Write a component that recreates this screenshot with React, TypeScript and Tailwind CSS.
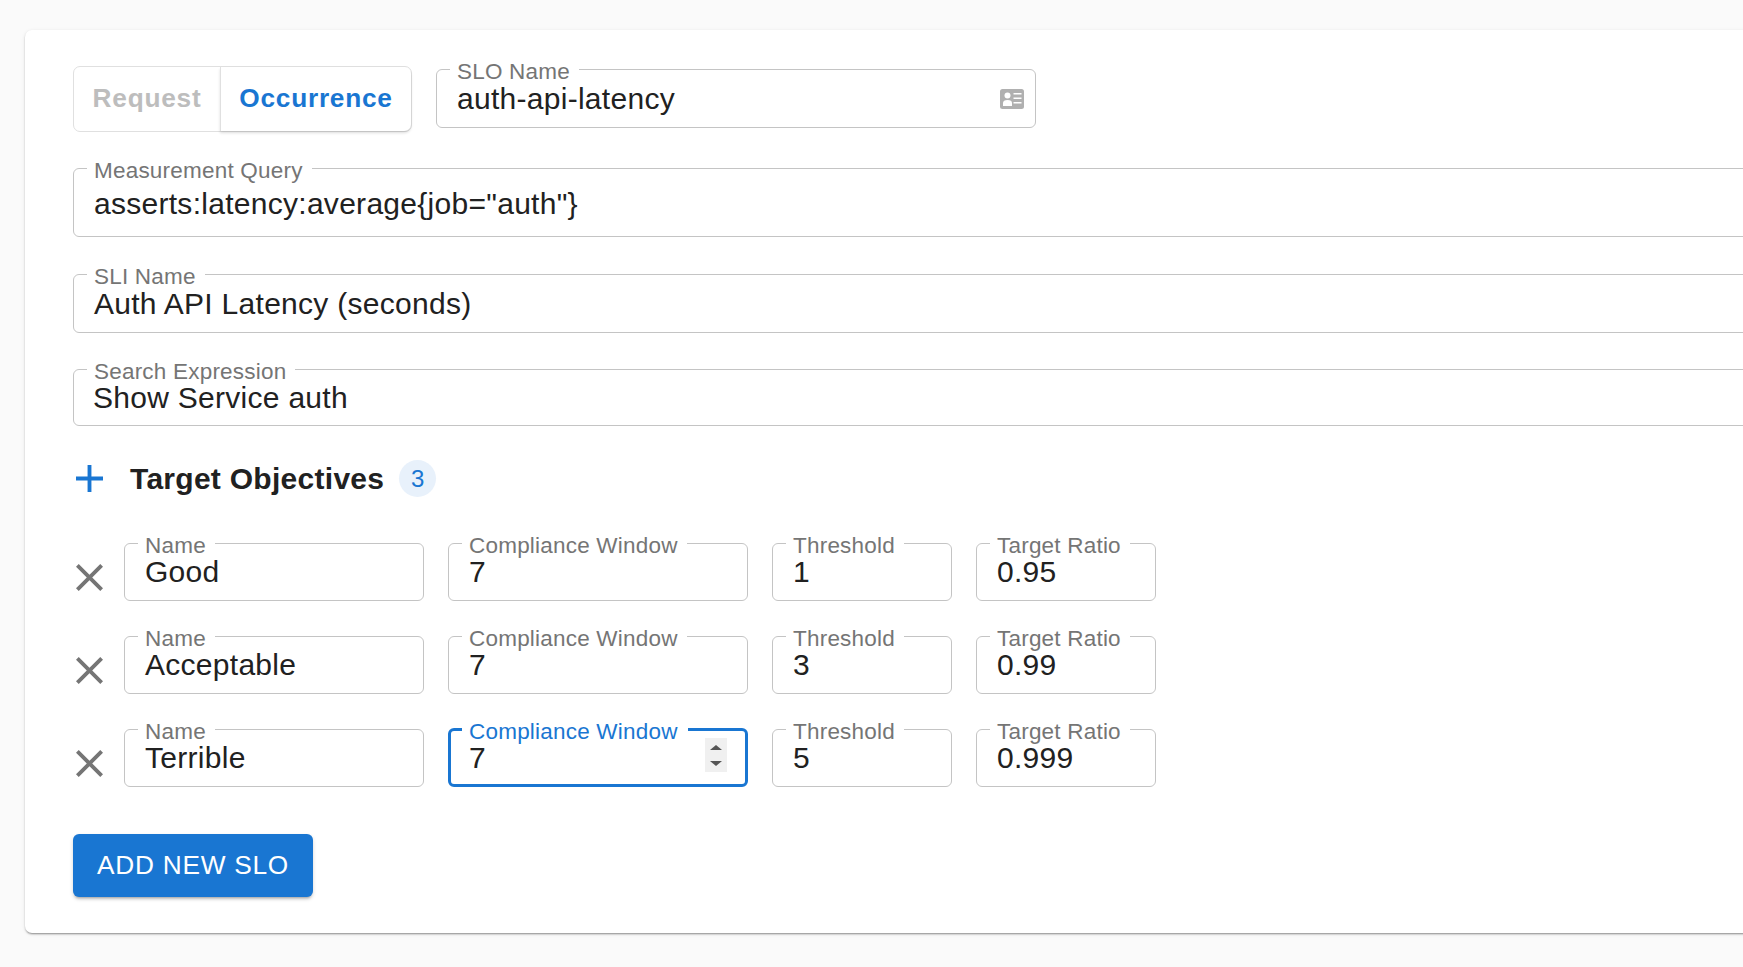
import type { ReactNode } from 'react'

interface FieldProps {
  label: string
  value: string
  className?: string
  bodyClassName?: string
  focused?: boolean
  children?: ReactNode
}

function Field({ label, value, className = '', bodyClassName = 'h-[45px]', focused = false, children }: FieldProps) {
  return (
    <fieldset
      className={`rounded-[6px] ${focused ? 'border-[3px] border-[#1976d2]' : 'border border-[#c4c4c4]'} ${className}`}
    >
      <legend
        className={`h-[24px] text-[22.5px] leading-[30px] tracking-[.21px] ${
          focused ? 'ml-[11px] pr-[10px] pl-[7px] text-[#1976d2]' : 'ml-[13px] pr-[9px] pl-[7px] text-[#757575]'
        }`}
      >
        {label}
      </legend>
      <div
        className={`flex items-start justify-between text-[30px] leading-[34px] tracking-[.28px] text-[#212121] ${
          focused ? 'pl-[18px] pr-[18px]' : 'pl-[20px] pr-[10px]'
        } ${bodyClassName}`}
      >
        <span>{value}</span>
        {children}
      </div>
    </fieldset>
  )
}

function CloseIcon() {
  return (
    <svg className="mt-[33px] ml-[3px] h-[27px] w-[27px] shrink-0 fill-[#757575]" viewBox="5 5 14 14">
      <path d="M19 6.41 17.59 5 12 10.59 6.41 5 5 6.41 10.59 12 5 17.59 6.41 19 12 13.41 17.59 19 19 17.59 13.41 12z" />
    </svg>
  )
}

function ContactIcon() {
  return (
    <svg className="mt-[7px] mr-px h-[20px] w-[24px] shrink-0" viewBox="0 0 24 20">
      <rect width="24" height="20" rx="2.5" fill="#b0b0b0" />
      <circle cx="7.5" cy="6.5" r="3" fill="#ffffff" />
      <path d="M3 17v-3q0-3 4.5-3t4.5 3v3z" fill="#ffffff" />
      <path d="M13.5 4h8v1.6h-8zM13.5 8.5h8v1.6h-8zM13.5 13h8v1.6h-8z" fill="#ffffff" />
    </svg>
  )
}

function Spinner() {
  return (
    <div className="-mt-[3px] flex h-[34px] w-[22px] flex-col items-center justify-center gap-[11px] bg-[#f0f0f0]">
      <svg className="h-[5px] w-[12px] fill-[#555555]" viewBox="0 0 12 5">
        <path d="M6 0 12 5H0z" />
      </svg>
      <svg className="h-[5px] w-[12px] fill-[#555555]" viewBox="0 0 12 5">
        <path d="M0 0h12L6 5z" />
      </svg>
    </div>
  )
}

const objectives = [
  { name: 'Good', window: '7', threshold: '1', ratio: '0.95' },
  { name: 'Acceptable', window: '7', threshold: '3', ratio: '0.99' },
  { name: 'Terrible', window: '7', threshold: '5', ratio: '0.999', focused: true },
]

export default function App() {
  return (
    <div className="h-[967px] overflow-hidden bg-[#fafafa] pt-[30px] pl-[25px] font-['Liberation_Sans',Arial,sans-serif]">
      <div className="w-[1800px] rounded-[7px] bg-white pt-[27px] pb-[36px] pl-[48px] shadow-[0_2px_2px_-1px_rgba(0,0,0,0.3),0_1px_2px_0_rgba(0,0,0,0.14),0_1px_4px_0_rgba(0,0,0,0.08)]">
        {/* Type toggle and SLO name */}
        <div className="flex items-start">
          <div className="mt-[9px] flex h-[66px] w-[339px] rounded-[7px] border border-[#e0e0e0] text-[26.25px] font-bold tracking-[.75px]">
            <div className="flex w-[146px] items-center justify-center text-[#bdbdbd]">Request</div>
            <div className="flex flex-1 items-center justify-center rounded-r-[7px] border-l border-[#e0e0e0] text-[#1976d2] shadow-[0_2px_3px_0_rgba(0,0,0,0.14)]">
              Occurrence
            </div>
          </div>
          <Field label="SLO Name" value="auth-api-latency" className="ml-[24px] w-[600px]" bodyClassName="h-[46px] pt-[1px]">
            <ContactIcon />
          </Field>
        </div>

        <Field
          label="Measurement Query"
          value={'asserts:latency:average{job="auth"}'}
          className="mt-[24px]"
          bodyClassName="h-[56px] pt-[7px]"
        />
        <Field
          label="SLI Name"
          value="Auth API Latency (seconds)"
          className="mt-[25px]"
          bodyClassName="h-[46px] pt-[1px]"
        />
        <Field
          label="Search Expression"
          value="Show Service auth"
          className="mt-[24px]"
          bodyClassName="h-[44px] [&>span]:-ml-px"
        />

        {/* Target objectives */}
        <div className="mt-[34px] flex h-[37px] items-center">
          <svg className="ml-[3px] h-[27px] w-[27px] fill-[#1976d2]" viewBox="5 5 14 14">
            <path d="M19 13h-6v6h-2v-6H5v-2h6V5h2v6h6v2z" />
          </svg>
          <h2 className="ml-[27px] text-[30px] font-bold tracking-[.28px] text-[#212121]">Target Objectives</h2>
          <span className="ml-[15px] flex h-[37px] w-[37px] items-center justify-center rounded-full bg-[#e8f1fb] text-[24px] text-[#1976d2]">
            3
          </span>
        </div>

        <div className="mt-[34px] flex flex-col gap-[23px]">
          {objectives.map((row) => (
            <div key={row.name} className="flex items-start">
              <CloseIcon />
              <Field label="Name" value={row.name} className="ml-[21px] w-[300px]" />
              <Field
                label="Compliance Window"
                value={row.window}
                className="ml-[24px] w-[300px]"
                bodyClassName={row.focused ? 'h-[43px]' : 'h-[45px]'}
                focused={row.focused}
              >
                {row.focused && <Spinner />}
              </Field>
              <Field label="Threshold" value={row.threshold} className="ml-[24px] w-[180px]" />
              <Field label="Target Ratio" value={row.ratio} className="ml-[24px] w-[180px]" />
            </div>
          ))}
        </div>

        <button className="mt-[47px] flex h-[63px] w-[240px] items-center justify-center rounded-[6px] bg-[#1976d2] text-[26.25px] tracking-[.75px] text-white shadow-[0_3px_3px_-2px_rgba(0,0,0,0.3),0_2px_4px_0_rgba(0,0,0,0.14)]">
          ADD NEW SLO
        </button>
      </div>
    </div>
  )
}
